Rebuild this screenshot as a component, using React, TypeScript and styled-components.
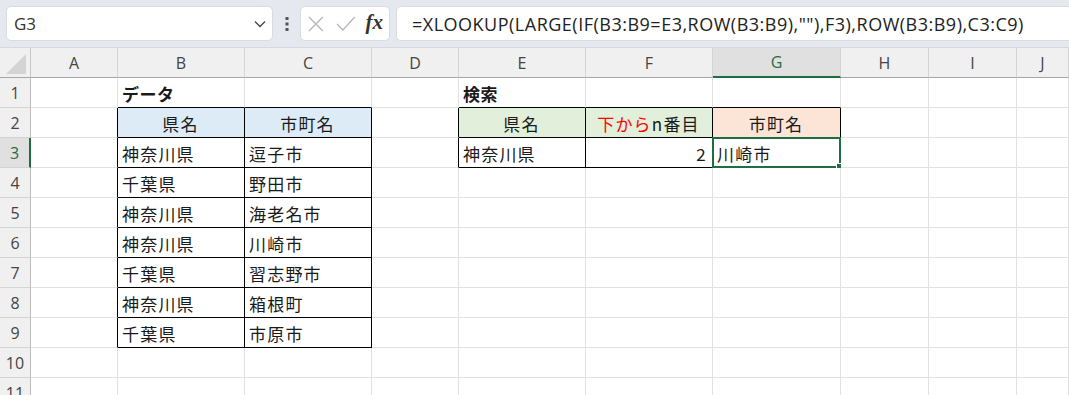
import React from "react"
import styled, { createGlobalStyle, css } from "styled-components"

const GREEN = "#1e6e42"
const GRID = "#e1e1e1"
const BORDER = "#000000"
const BLUE = "#ddebf7"
const LIGHT_GREEN = "#e2efda"
const ORANGE = "#fce4d6"

const COLUMNS = ["A", "B", "C", "D", "E", "F", "G", "H", "I", "J"]
const WIDTHS = [87, 127, 127, 87, 127, 127, 128, 88, 88]
const ROW_COUNT = 11
const ACTIVE = { row: 3, col: "G" }

const GlobalStyle = createGlobalStyle`
  html, body {
    margin: 0;
    padding: 0;
    height: 395px;
    overflow: hidden;
    background: #ffffff;
  }
  body {
    font-family: "Noto Sans CJK JP", "Liberation Sans", sans-serif;
  }
`

const Red = styled.span`
  color: #ff0000;
`

const Page = styled.div`
  display: flex;
  flex-direction: column;
  width: 1069px;
  height: 395px;
  overflow: hidden;
`

const Toolbar = styled.div`
  flex-shrink: 0;
  display: flex;
  align-items: center;
  height: 48px;
  padding: 0 0 0 6px;
  background: #e6e8ef;
  border-bottom: 1px solid #d6d8de;
  box-sizing: border-box;
`

const panel = css`
  height: 35px;
  box-sizing: border-box;
  background: #ffffff;
  border: 1px solid #d9dbe0;
  border-radius: 5px;
  display: flex;
  align-items: center;
`

const NameBox = styled.div`
  ${panel}
  width: 267px;
  padding: 0 6px 0 7px;
  justify-content: space-between;
`

const NameText = styled.span`
  font-family: "Open Sans", "Liberation Sans", sans-serif;
  font-size: 17px;
  color: #333;
`

const Grip = styled.div`
  width: 27px;
  display: flex;
  justify-content: center;
  align-items: center;
`

const FxBox = styled.div`
  ${panel}
  width: 90px;
  padding: 0 6px 0 7px;
  gap: 12px;
`

const FxLabel = styled.span`
  font-family: "Liberation Serif", "DejaVu Serif", serif;
  font-style: italic;
  font-weight: bold;
  font-size: 21px;
  line-height: 1;
  color: #333;
  margin-left: -2px;
  margin-top: -3px;
`

const FormulaInput = styled.div`
  ${panel}
  flex: 1;
  min-width: 0;
  margin-left: 6px;
  padding-left: 15px;
  border-right: none;
  border-radius: 5px 0 0 5px;
  font-family: "Open Sans", "Liberation Sans", sans-serif;
  font-size: 18px;
  letter-spacing: 0.5px;
  color: #222;
  white-space: nowrap;
  overflow: hidden;
`

const Sheet = styled.div`
  flex-shrink: 0;
  display: grid;
  grid-template-columns: 31px ${WIDTHS.map((w) => `${w}px`).join(" ")} 1fr;
  grid-template-rows: 30px;
  grid-auto-rows: 30px;
`

const headerText = css`
  font-family: "Open Sans", "Liberation Sans", sans-serif;
  font-size: 16px;
  color: #444;
  background: #f0f0f0;
  box-sizing: border-box;
  display: flex;
  align-items: center;
  justify-content: center;
`

const Corner = styled.div`
  ${headerText}
  justify-content: flex-end;
  align-items: flex-end;
  padding: 0 4px 3px 0;
  border-right: 1px solid #c8c8c8;
  border-bottom: 1px solid #a6a6a6;
`

const ColHeader = styled.div<{ $active?: boolean }>`
  ${headerText}
  border-right: 1px solid #d4d4d4;
  border-bottom: ${(p) => (p.$active ? `2px solid ${GREEN}` : "1px solid #a6a6a6")};
  ${(p) =>
    p.$active &&
    css`
      background: #e0e0e0;
      color: ${GREEN};
    `}
`

const RowHeader = styled.div<{ $active?: boolean }>`
  ${headerText}
  border-bottom: 1px solid #d4d4d4;
  border-right: ${(p) => (p.$active ? `2px solid ${GREEN}` : "1px solid #bcbcbc")};
  ${(p) =>
    p.$active &&
    css`
      background: #e0e0e0;
      color: ${GREEN};
    `}
`

type Align = "left" | "center" | "right"

const Cell = styled.div<{
  $fill?: string
  $align: Align
  $bold?: boolean
  $right: string
  $bottom: string
}>`
  position: relative;
  box-sizing: border-box;
  display: flex;
  align-items: center;
  justify-content: ${(p) =>
    p.$align === "center" ? "center" : p.$align === "right" ? "flex-end" : "flex-start"};
  padding: 2px 5px 0 4px;
  background: ${(p) => p.$fill || "#ffffff"};
  border-right: 1px solid ${(p) => p.$right};
  border-bottom: 1px solid ${(p) => p.$bottom};
  font-size: 17px;
  letter-spacing: ${(p) => (p.$bold ? "0.5px" : "1.2px")};
  font-weight: ${(p) => (p.$bold ? 700 : 400)};
  color: #1a1a1a;
  white-space: nowrap;
`

const Selection = styled.div`
  position: absolute;
  left: -1px;
  top: -1px;
  right: -1px;
  bottom: -1px;
  border: 2px solid ${GREEN};
  pointer-events: none;
`

const FillHandle = styled.div`
  position: absolute;
  right: -4px;
  bottom: -4px;
  width: 5px;
  height: 5px;
  background: ${GREEN};
  border: 1px solid #ffffff;
`

type CellData = {
  text?: React.ReactNode
  fill?: string
  align?: Align
  bold?: boolean
}

const DATA: Record<string, CellData> = {
  B1: { text: "データ", bold: true },
  E1: { text: "検索", bold: true },
  B2: { text: "県名", fill: BLUE, align: "center" },
  C2: { text: "市町名", fill: BLUE, align: "center" },
  E2: { text: "県名", fill: LIGHT_GREEN, align: "center" },
  F2: {
    text: (
      <>
        <Red>下から</Red>n番目
      </>
    ),
    fill: LIGHT_GREEN,
    align: "center",
  },
  G2: { text: "市町名", fill: ORANGE, align: "center" },
  E3: { text: "神奈川県" },
  F3: { text: "2", align: "right" },
  G3: { text: "川崎市" },
}

const LIST: [string, string][] = [
  ["神奈川県", "逗子市"],
  ["千葉県", "野田市"],
  ["神奈川県", "海老名市"],
  ["神奈川県", "川崎市"],
  ["千葉県", "習志野市"],
  ["神奈川県", "箱根町"],
  ["千葉県", "市原市"],
]
LIST.forEach(([pref, city], i) => {
  DATA[`B${i + 3}`] = { text: pref }
  DATA[`C${i + 3}`] = { text: city }
})

// ranges drawn with thin black borders
const BOXES = [
  { c1: 1, c2: 2, r1: 2, r2: 9 },
  { c1: 4, c2: 6, r1: 2, r2: 3 },
]
const inBox = (r: number, c: number) =>
  BOXES.some((b) => r >= b.r1 && r <= b.r2 && c >= b.c1 && c <= b.c2)

export default function App() {
  return (
    <>
      <GlobalStyle />
      <Page>
        <Toolbar>
          <NameBox>
            <NameText>G3</NameText>
            <svg width="12" height="8" viewBox="0 0 12 8">
              <path d="M1 1.5 L6 6.5 L11 1.5" fill="none" stroke="#444" strokeWidth="1.3" />
            </svg>
          </NameBox>
          <Grip>
            <svg width="4" height="16" viewBox="0 0 4 16">
              <rect x="0.5" y="1" width="3" height="3" fill="#555" />
              <rect x="0.5" y="6.5" width="3" height="3" fill="#555" />
              <rect x="0.5" y="12" width="3" height="3" fill="#555" />
            </svg>
          </Grip>
          <FxBox>
            <svg width="16" height="16" viewBox="0 0 16 16">
              <path d="M1 1 L15 15 M15 1 L1 15" stroke="#b8b8b8" strokeWidth="1.4" fill="none" />
            </svg>
            <svg width="20" height="15" viewBox="0 0 20 15">
              <path d="M1 8 L7 14 L19 1" stroke="#b8b8b8" strokeWidth="1.4" fill="none" />
            </svg>
            <FxLabel>fx</FxLabel>
          </FxBox>
          <FormulaInput>=XLOOKUP(LARGE(IF(B3:B9=E3,ROW(B3:B9),""),F3),ROW(B3:B9),C3:C9)</FormulaInput>
        </Toolbar>

        <Sheet>
          <Corner>
            <svg width="20" height="20" viewBox="0 0 20 20">
              <path d="M20 0 L20 20 L0 20 Z" fill="#d4d4d4" />
            </svg>
          </Corner>
          {COLUMNS.map((col) => (
            <ColHeader key={col} $active={col === ACTIVE.col}>
              {col}
            </ColHeader>
          ))}

          {Array.from({ length: ROW_COUNT }, (_, i) => i + 1).map((row) => (
            <React.Fragment key={row}>
              <RowHeader $active={row === ACTIVE.row}>{row}</RowHeader>
              {COLUMNS.map((col, c) => {
                const cell = DATA[`${col}${row}`] || {}
                const right = inBox(row, c) || inBox(row, c + 1) ? BORDER : GRID
                const bottom = inBox(row, c) || inBox(row + 1, c) ? BORDER : GRID
                const selected = row === ACTIVE.row && col === ACTIVE.col
                return (
                  <Cell
                    key={col}
                    $fill={cell.fill}
                    $align={cell.align || "left"}
                    $bold={cell.bold}
                    $right={right}
                    $bottom={bottom}
                  >
                    {cell.text}
                    {selected && (
                      <Selection>
                        <FillHandle />
                      </Selection>
                    )}
                  </Cell>
                )
              })}
            </React.Fragment>
          ))}
        </Sheet>
      </Page>
    </>
  )
}
